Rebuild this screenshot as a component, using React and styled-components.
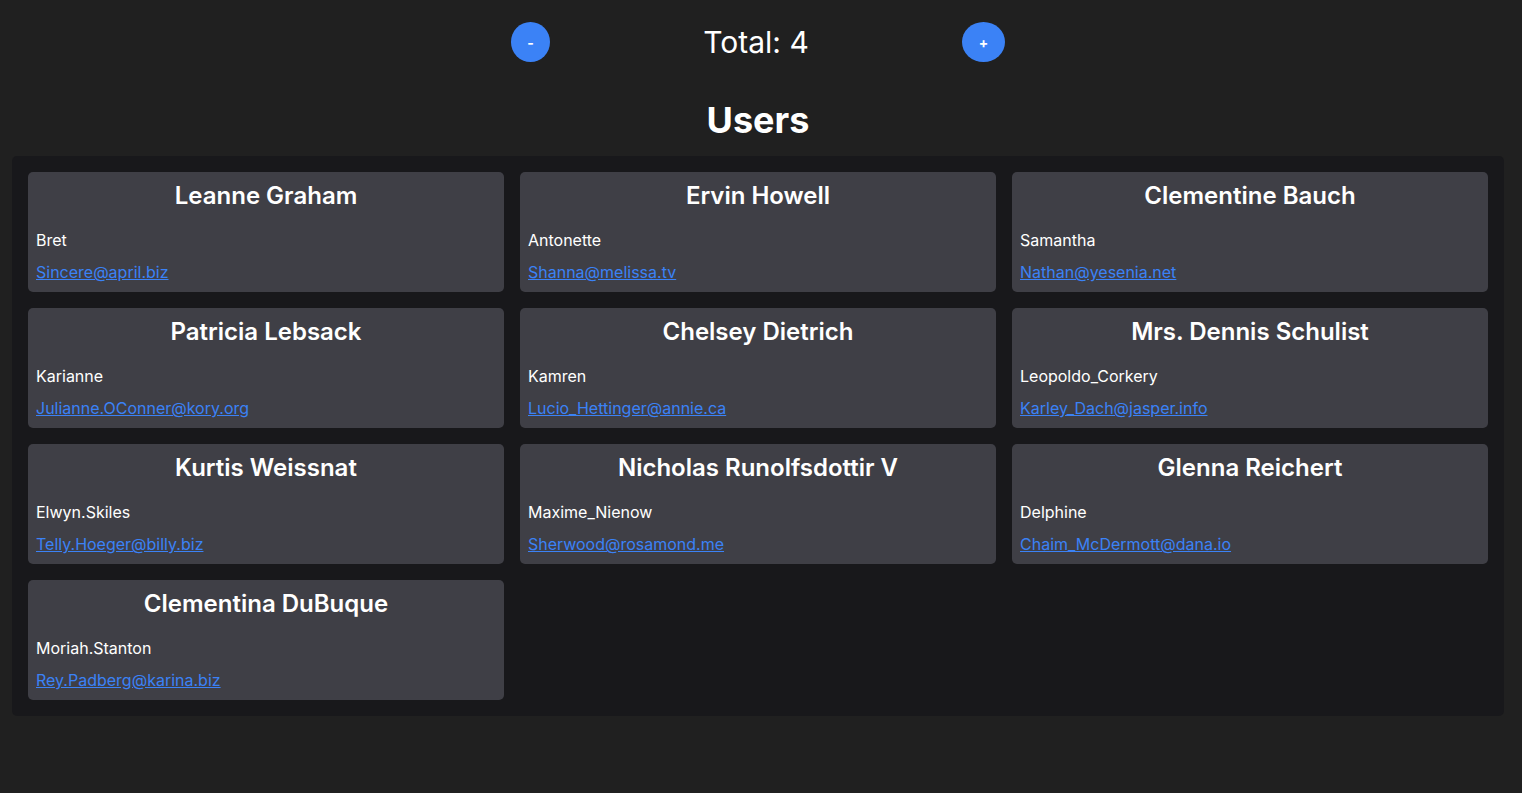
import React, { useState } from "react";
import styled, { createGlobalStyle } from "styled-components";

const GlobalStyle = createGlobalStyle`
  body {
    margin: 0;
    background-color: #202020;
    color: #ffffff;
    font-family: Inter, "Noto Sans", sans-serif;
  }
`;

const users = [
  { id: 1, name: "Leanne Graham", username: "Bret", email: "Sincere@april.biz" },
  { id: 2, name: "Ervin Howell", username: "Antonette", email: "Shanna@melissa.tv" },
  { id: 3, name: "Clementine Bauch", username: "Samantha", email: "Nathan@yesenia.net" },
  { id: 4, name: "Patricia Lebsack", username: "Karianne", email: "Julianne.OConner@kory.org" },
  { id: 5, name: "Chelsey Dietrich", username: "Kamren", email: "Lucio_Hettinger@annie.ca" },
  { id: 6, name: "Mrs. Dennis Schulist", username: "Leopoldo_Corkery", email: "Karley_Dach@jasper.info" },
  { id: 7, name: "Kurtis Weissnat", username: "Elwyn.Skiles", email: "Telly.Hoeger@billy.biz" },
  { id: 8, name: "Nicholas Runolfsdottir V", username: "Maxime_Nienow", email: "Sherwood@rosamond.me" },
  { id: 9, name: "Glenna Reichert", username: "Delphine", email: "Chaim_McDermott@dana.io" },
  { id: 10, name: "Clementina DuBuque", username: "Moriah.Stanton", email: "Rey.Padberg@karina.biz" },
];

const Page = styled.div`
  padding: 22px 18px 40px 12px;
`;

const Counter = styled.div`
  width: 494px;
  margin: 0 auto;
  display: flex;
  align-items: center;
  justify-content: space-between;
`;

const RoundButton = styled.button`
  width: ${(p) => p.$w}px;
  height: 40px;
  border: none;
  border-radius: 50%;
  background-color: #3b82f6;
  color: #ffffff;
  font-family: Inter, sans-serif;
  font-size: 14px;
  font-weight: 700;
  padding: 0;
  cursor: pointer;
`;

const Total = styled.span`
  font-size: 30px;
  line-height: 40px;
  font-weight: 400;
`;

const Title = styled.h1`
  margin: 38px 0 16px;
  text-align: center;
  font-size: 36px;
  line-height: 40px;
  font-weight: 700;
`;

const Panel = styled.section`
  background-color: #18181b;
  border-radius: 5px;
  padding: 16px;
  display: grid;
  grid-template-columns: repeat(3, 1fr);
  gap: 16px;
`;

const Card = styled.div`
  background-color: #3f3f46;
  border-radius: 5px;
  padding: 8px;
  height: 120px;
  box-sizing: border-box;
  display: flex;
  flex-direction: column;
`;

const Name = styled.h2`
  margin: 0 0 16px;
  text-align: center;
  font-size: 24px;
  line-height: 32px;
  font-weight: 600;
`;

const Username = styled.p`
  margin: 0 0 8px;
  font-size: 16px;
  line-height: 24px;
`;

const Email = styled.a`
  font-size: 16px;
  line-height: 24px;
  color: #3b82f6;
  text-decoration: underline;
  align-self: flex-start;
`;

export default function App() {
  const [count, setCount] = useState(4);

  return (
    <>
      <GlobalStyle />
      <Page>
        <Counter>
          <RoundButton $w={39} onClick={() => setCount(count - 1)}>-</RoundButton>
          <Total>Total: {count}</Total>
          <RoundButton $w={43} onClick={() => setCount(count + 1)}>+</RoundButton>
        </Counter>
        <Title>Users</Title>
        <Panel>
          {users.map((u) => (
            <Card key={u.id}>
              <Name>{u.name}</Name>
              <Username>{u.username}</Username>
              <Email href={`mailto:${u.email}`}>{u.email}</Email>
            </Card>
          ))}
        </Panel>
      </Page>
    </>
  );
}
